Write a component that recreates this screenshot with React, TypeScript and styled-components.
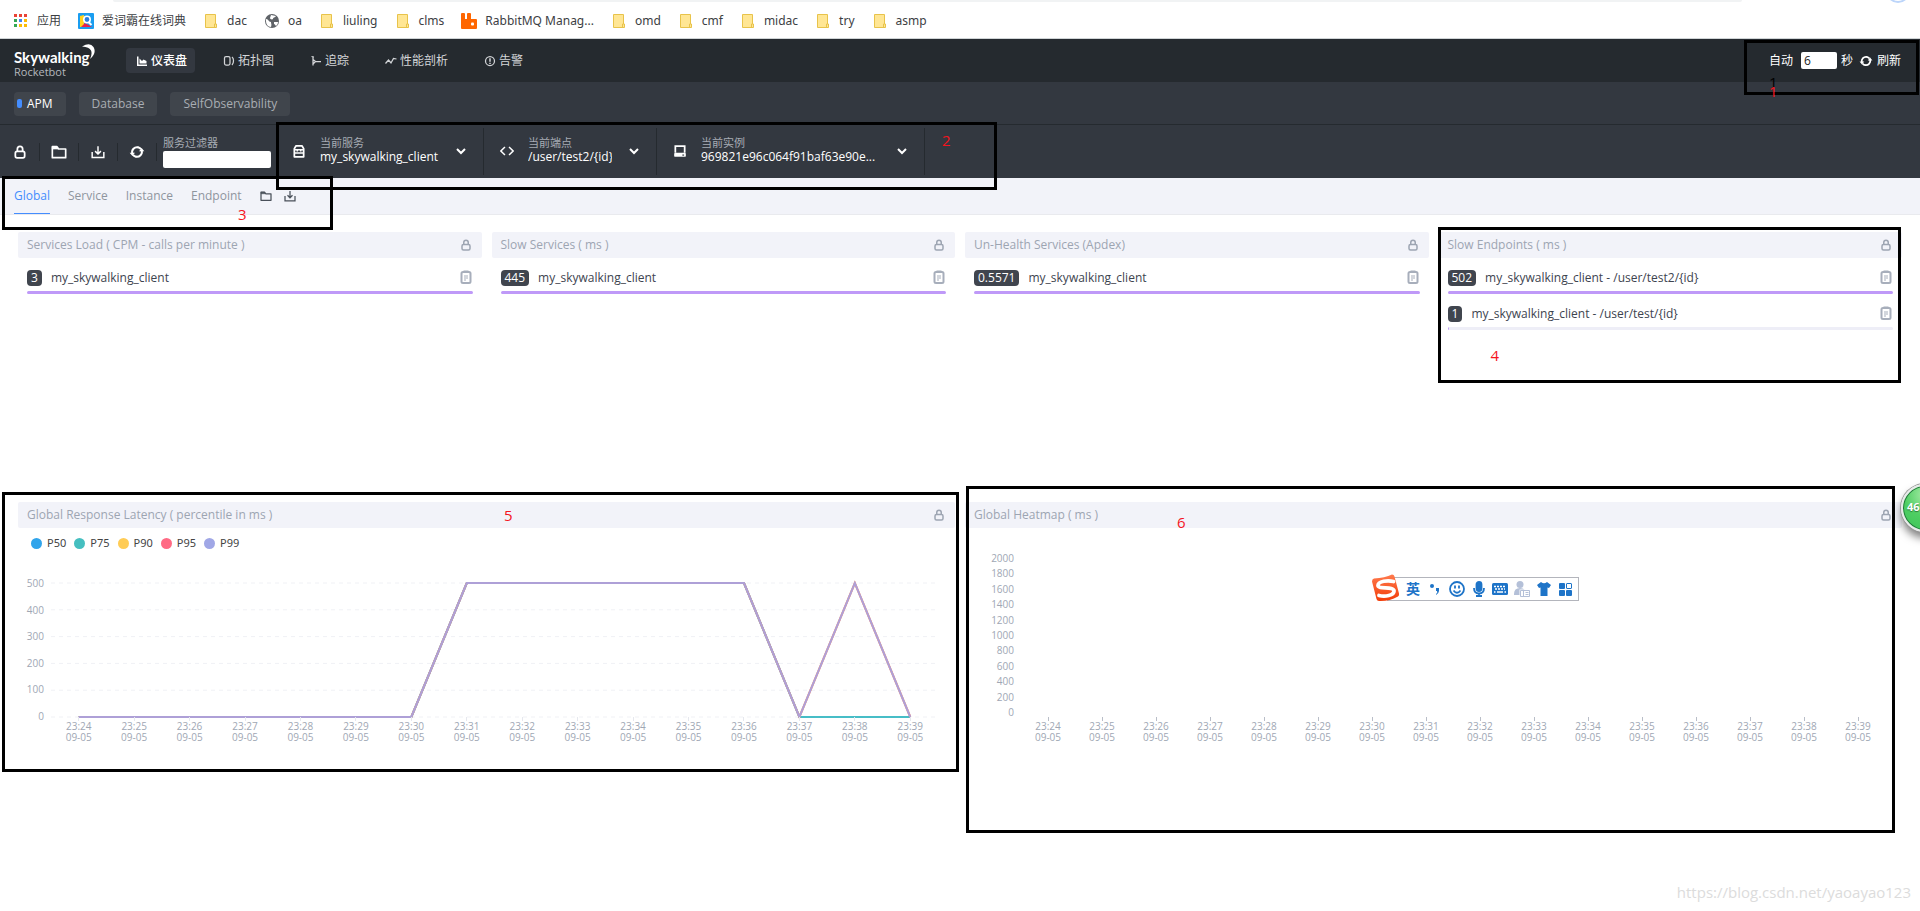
import React from 'react';
import styled, { createGlobalStyle, css } from 'styled-components';

const GlobalStyle = createGlobalStyle`
  *, *::before, *::after { box-sizing: border-box; }
  body {
    margin: 0;
    background: #fff;
    color: #3d444f;
    font-family: "Open Sans", "Noto Sans CJK SC", sans-serif;
    font-size: 12px;
    line-height: 16px;
  }
  button, input, select { font: inherit; color: inherit; }
  button { padding: 0; border: 0; background: none; cursor: pointer; }
  a { color: inherit; text-decoration: none; }
  svg { display: block; flex: none; }
  h2, ul { margin: 0; padding: 0; font-weight: 400; list-style: none; }
`;

/* ---------- shared ---------- */

const Page = styled.div`
  position: relative;
  min-height: 100vh;
  overflow: hidden;
`;

type MarkProps = {
  $top: number;
  $left?: number;
  $right?: number;
  $width?: number;
  $height: number;
};

const px = (v?: number) => (v === undefined ? 'auto' : `${v}px`);

const Mark = styled.div<MarkProps>`
  position: absolute;
  z-index: 5;
  top: ${(p) => px(p.$top)};
  left: ${(p) => px(p.$left)};
  right: ${(p) => px(p.$right)};
  width: ${(p) => px(p.$width)};
  height: ${(p) => px(p.$height)};
  border: 3px solid #000;
  pointer-events: none;
`;

const MarkNumber = styled.span<{ $top: number; $left: number; $dark?: boolean }>`
  position: absolute;
  top: ${(p) => p.$top}px;
  left: ${(p) => p.$left}px;
  color: ${(p) => (p.$dark ? '#000' : '#f5141e')};
  font-size: 15px;
  line-height: 14px;
`;

/* ---------- icons ---------- */

type IconProps = { size?: number };

const Icon = ({ size = 12, box = 24, children }: IconProps & { box?: number; children: React.ReactNode }) => (
  <svg width={size} height={size} viewBox={`0 0 ${box} ${box}`} fill="none" stroke="currentColor" strokeWidth="3" aria-hidden="true">
    {children}
  </svg>
);

const LockIcon = ({ size }: IconProps) => (
  <Icon size={size}>
    <rect x="4" y="11" width="16" height="11" rx="3" />
    <path d="M7.500 11V7a4.500 4.500 0 0 1 9 0v4" />
  </Icon>
);
const FolderIcon = ({ size }: IconProps) => (
  <Icon size={size}>
    <path d="M2 20.500V4h7l2.500 3.500H22v13z" strokeWidth="2.500" strokeLinejoin="round" />
    <path d="M2 4.500h7l2 3H2z" fill="currentColor" strokeWidth="1" />
  </Icon>
);
const DownloadIcon = ({ size }: IconProps) => (
  <Icon size={size}>
    <path d="M2 12v9.500h20V12" strokeWidth="2.500" />
    <path d="M12 2v13M7 10.500l5 5 5-5" strokeWidth="2.500" />
  </Icon>
);
const RefreshIcon = ({ size }: IconProps) => (
  <Icon size={size}>
    <path d="M5 14.500A7.500 7.500 0 0 1 14 5M19 9.500A7.500 7.500 0 0 1 10 19" />
    <path d="M1 13h8l-4 5zM15 11h8l-4-5z" fill="currentColor" stroke="none" />
    <path d="M13 4.800a7.500 7.500 0 0 1 5 3M11 19.200a7.500 7.500 0 0 1-5-3" />
  </Icon>
);
const ChartIcon = () => (
  <Icon>
    <path d="M3.500 3v17.500H22" />
    <path d="M7 17V7l5 5 3-3 6 3v5z" fill="currentColor" stroke="none" />
  </Icon>
);
const TopologyIcon = () => (
  <Icon>
    <rect x="3" y="3" width="11" height="17" rx="3" strokeWidth="2.500" />
    <path d="M18 4c4 3 4 12 0 16" strokeWidth="2.500" />
  </Icon>
);
const TraceIcon = () => (
  <Icon>
    <path d="M6 3v18M6 9l5 4h11M6 18l5-5M3 3l5 1" strokeWidth="2.500" />
  </Icon>
);
const ProfileIcon = () => (
  <Icon>
    <path d="M1 17l6-7 5 6 5-9 6 1" strokeWidth="2.500" />
  </Icon>
);
const AlarmIcon = () => (
  <Icon>
    <circle cx="12" cy="12" r="9" strokeWidth="2.500" />
    <path d="M12 6.500v7M12 15.500v2.500" />
  </Icon>
);
const ServiceIcon = () => (
  <Icon size={14}>
    <path d="M4 8l3-5h10l3 5v14H4z" strokeLinejoin="round" />
    <path d="M4 10h16M4 15.500h16M9 10v3M15 10v3" strokeWidth="2.500" />
  </Icon>
);
const CodeIcon = () => (
  <Icon size={14}>
    <path d="M8.500 5l-7 7 7 7M15.500 5l7 7-7 7" strokeWidth="2.500" />
  </Icon>
);
const InstanceIcon = () => (
  <Icon size={14}>
    <path d="M4 15V3.500h16V15" />
    <rect x="2" y="15" width="20" height="7" rx="2" fill="currentColor" stroke="none" />
    <path d="M16 19h3" stroke="#333840" strokeWidth="2" />
  </Icon>
);
const ChevronIcon = () => (
  <Icon size={10} box={10}>
    <path d="M1 3l4 4 4-4" strokeWidth="2" />
  </Icon>
);
const ClipboardIcon = () => (
  <svg width="12" height="14" viewBox="0 0 12 14" fill="none" stroke="currentColor" aria-hidden="true">
    <rect x="1.500" y="2" width="9" height="11" rx="1.500" strokeWidth="2" />
    <path d="M3.500 1.500h5" strokeWidth="2" />
    <path d="M4 6h4M4 8h4M4 10h2" strokeWidth="1" />
  </svg>
);

/* ---------- bookmarks bar ---------- */

const BookmarkBar = styled.nav`
  position: relative;
  display: flex;
  align-items: center;
  gap: 17px;
  height: 39px;
  padding: 3px 14px 0 13px;
  border-bottom: 1px solid #cfd4d6;
  color: #3c4043;
  font-family: "Noto Sans", "Noto Sans CJK SC", sans-serif;
  white-space: nowrap;
`;
const AddressEdge = styled.div`
  position: absolute;
  top: 0;
  left: 113px;
  right: 178px;
  height: 2px;
  border-radius: 0 0 8px 8px;
  background: #f1f3f4;
`;
const AvatarEdge = styled.div`
  position: absolute;
  top: -21px;
  right: 10px;
  width: 24px;
  height: 24px;
  border: 2px solid #bcd5fa;
  border-radius: 50%;
`;
const Bookmark = styled.a`
  display: flex;
  align-items: center;
  gap: 8px;
`;

const AppsGlyph = () => {
  const colours = ['#ea4335', '#ea4335', '#ea4335', '#34a853', '#4285f4', '#fbbc05', '#34a853', '#fbbc05', '#fbbc05'];
  return (
    <svg width="16" height="16" viewBox="0 0 16 16" aria-hidden="true">
      {colours.map((c, i) => (
        <rect key={i} x={1 + (i % 3) * 5} y={1 + Math.floor(i / 3) * 5} width="3" height="3" fill={c} />
      ))}
    </svg>
  );
};
const DictGlyph = () => (
  <svg width="16" height="16" viewBox="0 0 16 16" aria-hidden="true">
    <rect width="16" height="16" rx="1" fill="#1a9df0" />
    <path d="M2 14V3l4-1v12z" fill="#ffd21e" />
    <path d="M3 14l4-4 7 4z" fill="#e8204c" />
    <circle cx="9" cy="6.500" r="3.200" fill="#2a7fe0" stroke="#fff" strokeWidth="1.600" />
    <path d="M10.500 9l3 3" stroke="#fff" strokeWidth="2" />
  </svg>
);
const FolderGlyph = () => (
  <svg width="16" height="16" viewBox="0 0 16 16" aria-hidden="true">
    <path d="M2.500 1.500h10v9.500h1v3.500h-11z" fill="#ffe694" stroke="#e8c34a" />
    <path d="M11.500 14v-3h1" fill="none" stroke="#e8c34a" />
  </svg>
);
const GlobeGlyph = () => (
  <svg width="16" height="16" viewBox="0 0 16 16" aria-hidden="true">
    <circle cx="8" cy="8" r="7" fill="#5f6368" />
    <path d="M2 6c3 0 2 3 5 3 0 2 1 2 0 5-3 0-5-3-5-6zM7 2l5 1c-1 2-3 1-3 3-1 1-3 0-3-1zM10 9h4c0 2-1 3-2 4-1-1-1-2-2-2z" fill="#fff" />
  </svg>
);
const RabbitGlyph = () => (
  <svg width="16" height="16" viewBox="0 0 16 16" aria-hidden="true">
    <path d="M0 1a1 1 0 0 1 1-1h2a1 1 0 0 1 1 1v5h2V1a1 1 0 0 1 1-1h2a1 1 0 0 1 1 1v5h5a1 1 0 0 1 1 1v8a1 1 0 0 1-1 1H1a1 1 0 0 1-1-1z" fill="#f60" />
    <rect x="10" y="9.500" width="3" height="3" rx="1" fill="#fff" />
  </svg>
);

const bookmarks: [React.ComponentType, string][] = [
  [AppsGlyph, '应用'],
  [DictGlyph, '爱词霸在线词典'],
  [FolderGlyph, 'dac'],
  [GlobeGlyph, 'oa'],
  [FolderGlyph, 'liuling'],
  [FolderGlyph, 'clms'],
  [RabbitGlyph, 'RabbitMQ Manag...'],
  [FolderGlyph, 'omd'],
  [FolderGlyph, 'cmf'],
  [FolderGlyph, 'midac'],
  [FolderGlyph, 'try'],
  [FolderGlyph, 'asmp'],
];

/* ---------- header ---------- */

const Header = styled.header`
  position: relative;
  display: flex;
  align-items: center;
  height: 43px;
  padding: 0 19px 0 14px;
  background: #252a2f;
  color: #d3d5d8;
`;
const Brand = styled.a`
  position: relative;
  width: 112px;
  padding-top: 6px;
  color: #fff;
`;
const BrandName = styled.div`
  font-family: Lato, sans-serif;
  font-size: 15px;
  font-weight: 700;
  line-height: 16px;
`;
const BrandSub = styled.div`
  color: #b4b8bd;
  font-size: 11px;
  line-height: 14px;
`;
const Moon = styled.svg`
  position: absolute;
  top: 1px;
  left: 68px;
`;
const MainNav = styled.nav`
  display: flex;
  gap: 18px;
`;
const NavLink = styled.a<{ $active?: boolean }>`
  display: flex;
  align-items: center;
  gap: 3px;
  height: 25px;
  padding: 0 8px 0 10px;
  border-radius: 4px;
  ${(p) =>
    p.$active &&
    css`
      background: #333840;
      color: #fff;
      font-weight: 500;
    `}
`;
const AutoRefresh = styled.div`
  display: flex;
  align-items: center;
  margin-left: auto;
  color: #fff;
`;
const SecondsInput = styled.input`
  width: 36px;
  height: 17px;
  margin: 0 4px 0 8px;
  padding: 0 3px;
  border: 0;
  border-radius: 2px;
  background: #fff;
  color: #222;
`;
const RefreshButton = styled.button`
  display: flex;
  align-items: center;
  gap: 4px;
  margin-left: 6px;
`;

/* ---------- dashboards row ---------- */

const GroupRow = styled.div`
  display: flex;
  align-items: center;
  gap: 13px;
  height: 43px;
  padding: 1px 14px 0;
  border-bottom: 1px solid #252a2f;
  background: #333840;
`;
const GroupButton = styled.button<{ $active?: boolean }>`
  display: flex;
  align-items: center;
  gap: 5px;
  height: 24px;
  padding: 0 13px;
  border-radius: 4px;
  background: #40454c;
  color: #a9adb3;
  ${(p) =>
    p.$active &&
    css`
      padding: 0 13px 0 3px;
      color: #fff;
      &::before {
        content: '';
        width: 5px;
        height: 9px;
        border-radius: 2px;
        background: #448dfe;
      }
    `}
`;

/* ---------- toolbar ---------- */

const Toolbar = styled.div`
  display: flex;
  height: 53px;
  background: #333840;
  color: #fff;
`;
const ToolButton = styled.button`
  display: flex;
  align-items: center;
  justify-content: center;
  align-self: center;
  width: 39px;
  height: 18px;
  border-right: 1px solid #252a2f;
  &:first-child { width: 40px; }
`;
const Filter = styled.label`
  display: flex;
  flex-direction: column;
  justify-content: center;
  gap: 1px;
  padding: 0 5px 0 6px;
`;
const FieldLabel = styled.span`
  color: #a7acb4;
  font-size: 11px;
  line-height: 14px;
`;
const FilterInput = styled.input`
  width: 108px;
  height: 17px;
  padding: 0 4px;
  border: 0;
  border-radius: 2px;
  background: #fff;
  color: #222;
`;
const Selectors = styled.div`
  position: relative;
  display: flex;
  align-items: center;
`;
const Selector = styled.label`
  display: flex;
  align-items: center;
  height: 47px;
  padding: 0 17px 2px 16px;
  border-right: 1px solid #252a2f;
`;
const SelectorText = styled.span<{ $width: number }>`
  display: flex;
  flex-direction: column;
  width: ${(p) => p.$width}px;
  margin: 0 17px 0 14px;
`;
const Select = styled.select`
  width: 100%;
  height: 16px;
  margin: -1px 0 0;
  padding: 0;
  border: 0;
  appearance: none;
  background: #333840;
  color: #fff;
  line-height: 16px;
`;

const selectors = [
  { label: '当前服务', value: 'my_skywalking_client', width: 119, Glyph: ServiceIcon },
  { label: '当前端点', value: '/user/test2/{id}', width: 84, Glyph: CodeIcon },
  { label: '当前实例', value: '969821e96c064f91baf63e90e...', width: 179, Glyph: InstanceIcon },
];

/* ---------- tabs ---------- */

const TabBar = styled.nav`
  position: relative;
  display: flex;
  align-items: center;
  gap: 18px;
  height: 37px;
  padding: 0 14px;
  border-bottom: 1px solid #e9eaee;
  background: #f2f3f9;
  color: #8f959e;
`;
const Tab = styled.a<{ $active?: boolean }>`
  padding: 10px 0 9px;
  border-bottom: 1px solid ${(p) => (p.$active ? '#448dfe' : 'transparent')};
  color: ${(p) => (p.$active ? '#448dfe' : 'inherit')};
`;
const TabTools = styled.div`
  display: flex;
  gap: 12px;
  color: #4a505a;
`;

/* ---------- panels ---------- */

const Board = styled.main`
  display: grid;
  grid-template-columns: repeat(4, 1fr);
  grid-template-rows: 270px auto;
  padding: 17px 13px;
`;
const Panel = styled.section<{ $span?: number }>`
  grid-column: span ${(p) => p.$span ?? 1};
  min-width: 0;
  padding: 0 5px;
`;
const PanelInner = styled.div`
  position: relative;
`;
const PanelHead = styled.div`
  display: flex;
  align-items: center;
  justify-content: space-between;
  height: 26px;
  padding: 0 10px 0 9px;
  border-radius: 2px;
  background: #f2f3f9;
  color: #9da5b2;
`;
const PanelTitle = styled.h2`
  font-size: 12px;
  line-height: 16px;
`;
const List = styled.ul`
  padding: 11px 9px 0;
`;
const Item = styled.li`
  height: 36px;
  padding-top: 1px;
`;
const ItemRow = styled.div`
  display: flex;
  align-items: center;
  height: 16px;
`;
const Badge = styled.span`
  height: 16px;
  margin-right: 9px;
  padding: 0 4px;
  border-radius: 4px;
  background: #40454e;
  color: #fff;
`;
const CopyButton = styled.button`
  margin: -2px 1px 0 auto;
  color: #a7aebb;
`;
const Meter = styled.div`
  height: 3px;
  margin-top: 5px;
  border-radius: 2px;
  background: #eeeef7;
  overflow: hidden;
`;
const MeterFill = styled.div`
  height: 3px;
  min-width: 1px;
  background: #bf99f8;
`;

type Row = { value: string; name: string; share: number };

const Head = ({ title }: { title: string }) => (
  <PanelHead>
    <PanelTitle>{title}</PanelTitle>
    <button aria-label={`Lock ${title}`}>
      <LockIcon size={12} />
    </button>
  </PanelHead>
);

const ListPanel = ({ title, rows, children }: { title: string; rows: Row[]; children?: React.ReactNode }) => (
  <Panel>
    <PanelInner>
      <Head title={title} />
      <List>
        {rows.map((r) => (
          <Item key={r.name}>
            <ItemRow>
              <Badge>{r.value}</Badge>
              {r.name}
              <CopyButton aria-label={`Copy ${r.name}`}>
                <ClipboardIcon />
              </CopyButton>
            </ItemRow>
            <Meter>
              <MeterFill style={{ width: `${r.share}%` }} />
            </Meter>
          </Item>
        ))}
      </List>
      {children}
    </PanelInner>
  </Panel>
);

/* ---------- charts ---------- */

const Legend = styled.div`
  display: flex;
  align-items: flex-start;
  gap: 8px;
  height: 32px;
  padding: 7px 13px 0;
  color: #444;
  font-family: "Noto Sans", sans-serif;
  font-size: 11px;
`;
const LegendItem = styled.span<{ $colour: string }>`
  display: flex;
  align-items: center;
  gap: 5px;
  &::before {
    content: '';
    width: 11px;
    height: 11px;
    border-radius: 50%;
    background: ${(p) => p.$colour};
  }
`;
const ChartArea = styled.div<{ $left: number; $top: number }>`
  display: grid;
  grid-template-columns: ${(p) => p.$left}px 1fr;
  padding: ${(p) => p.$top}px 17px 0 0;
  color: #a0a7b4;
  font-size: 10px;
  line-height: 10px;
`;
const YAxis = styled.div<{ $height: number; $overhang?: number }>`
  display: flex;
  flex-direction: column;
  justify-content: space-between;
  height: ${(p) => p.$height}px;
  margin-bottom: -${(p) => p.$overhang ?? 0}px;
  padding-right: 7px;
  text-align: right;
`;
const Plot = styled.div`
  display: flex;
  align-items: flex-end;
  svg { width: 100%; height: 134px; overflow: visible; }
`;
const XAxis = styled.div`
  display: flex;
  grid-column: 2;
`;
const XLabel = styled.div<{ $tick: string }>`
  flex: 1;
  line-height: 11px;
  text-align: center;
  &::before {
    content: '';
    display: block;
    width: 1px;
    height: 4px;
    margin: 0 auto;
    background: ${(p) => p.$tick};
  }
`;

const times = Array.from({ length: 16 }, (_, i) => `23:${24 + i}`);

const TimeAxis = ({ tick }: { tick: string }) => (
  <XAxis>
    {times.map((t) => (
      <XLabel key={t} $tick={tick}>
        {t}
        <br />
        09-05
      </XLabel>
    ))}
  </XAxis>
);

const low = [0, 0, 0, 0, 0, 0, 0, 500, 500, 500, 500, 500, 500, 0, 0, 0];
const high = [0, 0, 0, 0, 0, 0, 0, 500, 500, 500, 500, 500, 500, 0, 500, 0];
const series = [
  { name: 'P50', colour: '#30a4eb', data: low },
  { name: 'P75', colour: '#45bfc0', data: low },
  { name: 'P90', colour: '#ffcc55', data: high },
  { name: 'P95', colour: '#ff6a84', data: high },
  { name: 'P99', colour: '#a0a7e6', data: high },
];

const LatencyChart = () => (
  <>
    <Legend>
      {series.map((s) => (
        <LegendItem key={s.name} $colour={s.colour}>
          {s.name}
        </LegendItem>
      ))}
    </Legend>
    <ChartArea $left={33} $top={18}>
      <YAxis $height={143} $overhang={4}>
        {[500, 400, 300, 200, 100, 0].map((v) => (
          <span key={v}>{v}</span>
        ))}
      </YAxis>
      <Plot>
        <svg viewBox="0 0 1600 500" preserveAspectRatio="none" role="img" aria-label="Global response latency">
          {[0, 100, 200, 300, 400, 500].map((y) => (
            <line key={y} x1="0" x2="1600" y1={y} y2={y} stroke="#f0f1f5" strokeDasharray="4 4" vectorEffect="non-scaling-stroke" />
          ))}
          {series.map((s) => (
            <polyline
              key={s.name}
              points={s.data.map((v, i) => `${i * 100 + 50},${500 - v}`).join(' ')}
              fill="none"
              stroke={s.colour}
              strokeOpacity="0.85"
              strokeWidth="2"
              vectorEffect="non-scaling-stroke"
            />
          ))}
        </svg>
      </Plot>
      <TimeAxis tick="#e6e8ee" />
    </ChartArea>
  </>
);

const HeatmapChart = () => (
  <ChartArea $left={56} $top={25}>
    <YAxis $height={164}>
      {Array.from({ length: 11 }, (_, i) => 2000 - i * 200).map((v) => (
        <span key={v}>{v}</span>
      ))}
    </YAxis>
    <Plot />
    <TimeAxis tick="#b9bec8" />
  </ChartArea>
);

/* ---------- floating widgets ---------- */

const ImeBar = styled.div`
  position: absolute;
  z-index: 6;
  top: 75px;
  right: 323px;
  display: flex;
  align-items: center;
  justify-content: space-between;
  width: 192px;
  height: 24px;
  padding: 0 4px 0 17px;
  border: 1px solid #b3b5bc;
  background: #fff;
  color: #1e74c8;
  button { display: flex; align-items: center; justify-content: center; width: 16px; }
`;
const ImeLogo = styled.svg`
  position: absolute;
  top: -5px;
  left: -17px;
`;
const ImeMode = styled.button`
  font-size: 14px;
  font-weight: 700;
`;

const Ime = () => (
  <ImeBar>
    <ImeLogo width="30" height="30" viewBox="0 0 30 30" aria-hidden="true">
      <defs>
        <linearGradient id="ime" x1="0" y1="0" x2="0" y2="1">
          <stop offset="0" stopColor="#ff7a4d" />
          <stop offset="1" stopColor="#f23d0a" />
        </linearGradient>
      </defs>
      <path d="M3 5.500Q14 5 21 1.500q2 0 2.500 2l4.500 17q.500 2-1 3Q18 28.500 8 28q-2 0-2.500-2L1 8.500Q1 6 3 5.500z" fill="url(#ime)" />
      <path d="M22.500 8.500C17 7 7 8 7 12.500c0 4 16 .500 16 5.500 0 4.500-9 6-15 4.500" fill="none" stroke="#fff" strokeWidth="3.800" strokeLinecap="round" />
    </ImeLogo>
    <ImeMode aria-label="英文输入">英</ImeMode>
    <button aria-label="标点">
      <svg width="10" height="12" viewBox="0 0 10 12" fill="currentColor"><circle cx="2" cy="3" r="2" /><path d="M6 5h3v3q0 2-3 4v-1q2-1 1-3H6z" /></svg>
    </button>
    <button aria-label="表情">
      <svg width="16" height="16" viewBox="0 0 16 16" fill="none" stroke="currentColor" strokeWidth="1.800"><circle cx="8" cy="8" r="7" /><path d="M6 4.500v3M10 4.500v3M4.500 9.500q3.500 4.500 7 0" /></svg>
    </button>
    <button aria-label="语音">
      <svg width="12" height="16" viewBox="0 0 12 16" fill="none" stroke="currentColor" strokeWidth="1.800"><rect x="3.500" y="1" width="5" height="9" rx="2.500" fill="currentColor" /><path d="M1 7q0 5.500 5 5.500T11 7M6 12v3M3 15h6" /></svg>
    </button>
    <button aria-label="键盘">
      <svg width="16" height="12" viewBox="0 0 16 12"><rect width="16" height="12" rx="1.500" fill="currentColor" /><path d="M2 3.500h12M3 6h10" stroke="#fff" strokeWidth="1.500" strokeDasharray="2 1" /><path d="M2 9h1.500M5 9h6M12.500 9H14" stroke="#fff" strokeWidth="1.500" /></svg>
    </button>
    <button aria-label="账户">
      <svg width="16" height="16" viewBox="0 0 16 16"><circle cx="6" cy="3.500" r="3.500" fill="#b4c0d8" /><path d="M0 13q0-6 6-6 3 0 4.500 1.500H5.500V14H0z" fill="#b4c0d8" /><path d="M6.500 9.500h9v6h-9zM9.500 9.500v6M11.500 11.500h3M11.500 13.500h3" fill="#fff" stroke="#b4c0d8" /></svg>
    </button>
    <button aria-label="皮肤">
      <svg width="14" height="14" viewBox="0 0 14 14" fill="currentColor"><path d="M4 0q3 2.500 6 0l4 3-2 3-1.500-.500V14h-7V5.500L2 6 0 3z" /></svg>
    </button>
    <button aria-label="工具箱">
      <svg width="13" height="13" viewBox="0 0 13 13" fill="currentColor"><rect width="6" height="6" rx="1" /><rect x="7.500" y=".5" width="5" height="5" rx=".5" fill="none" stroke="currentColor" /><rect y="7" width="6" height="6" rx="1" /><rect x="7" y="7" width="6" height="6" rx="1" /></svg>
    </button>
  </ImeBar>
);

const SpeedBall = styled.div`
  position: absolute;
  z-index: 7;
  top: 484px;
  right: -29px;
  width: 48px;
  height: 48px;
  padding: 13px 0 0 4px;
  border: 2px solid #e8eaea;
  border-radius: 50%;
  background: radial-gradient(circle at 50% 20%, #a5eba5, #4fce63 50%, #3cc457);
  box-shadow: 0 0 0 1px #999, inset 0 0 0 1px #23763b, 0 6px 9px rgba(0, 0, 0, 0.5);
  color: #fff;
  font-size: 11px;
  font-weight: 700;
  text-shadow: 0 1px 1px #2b7b39;
`;
const Watermark = styled.div`
  position: absolute;
  right: 9px;
  bottom: 9px;
  color: #dcdcdc;
  font-size: 15px;
  line-height: 20px;
`;

export default function App() {
  return (
    <Page>
      <GlobalStyle />
      <BookmarkBar aria-label="书签">
        <AddressEdge />
        <AvatarEdge />
        {bookmarks.map(([Glyph, text]) => (
          <Bookmark key={text} href="#">
            <Glyph />
            {text}
          </Bookmark>
        ))}
      </BookmarkBar>

      <Header>
        <Brand href="#">
          <BrandName>Skywalking</BrandName>
          <BrandSub>Rocketbot</BrandSub>
          <Moon width="14" height="16" viewBox="0 0 14 16" aria-hidden="true">
            <path d="M0 2.500Q8-2 11.500 3q3.500 6-3.500 12 2.500-5 1-8.500T0 2.500z" fill="#fff" />
          </Moon>
        </Brand>
        <MainNav>
          <NavLink href="#" $active><ChartIcon />仪表盘</NavLink>
          <NavLink href="#"><TopologyIcon />拓扑图</NavLink>
          <NavLink href="#"><TraceIcon />追踪</NavLink>
          <NavLink href="#"><ProfileIcon />性能剖析</NavLink>
          <NavLink href="#"><AlarmIcon />告警</NavLink>
        </MainNav>
        <AutoRefresh>
          <label htmlFor="seconds">自动</label>
          <SecondsInput id="seconds" defaultValue="6" />
          秒
          <RefreshButton><RefreshIcon size={14} />刷新</RefreshButton>
        </AutoRefresh>
        <Mark $top={1} $right={1} $width={175} $height={55}>
          <MarkNumber $top={32} $left={22} $dark>1</MarkNumber>
          <MarkNumber $top={41} $left={22}>1</MarkNumber>
        </Mark>
      </Header>

      <GroupRow>
        <GroupButton $active>APM</GroupButton>
        <GroupButton>Database</GroupButton>
        <GroupButton>SelfObservability</GroupButton>
      </GroupRow>

      <Toolbar>
        <ToolButton aria-label="锁定"><LockIcon size={14} /></ToolButton>
        <ToolButton aria-label="打开"><FolderIcon size={16} /></ToolButton>
        <ToolButton aria-label="下载"><DownloadIcon size={14} /></ToolButton>
        <ToolButton aria-label="刷新"><RefreshIcon size={16} /></ToolButton>
        <Filter>
          <FieldLabel>服务过滤器</FieldLabel>
          <FilterInput />
        </Filter>
        <Selectors>
          {selectors.map(({ label, value, width, Glyph }) => (
            <Selector key={label}>
              <Glyph />
              <SelectorText $width={width}>
                <FieldLabel>{label}</FieldLabel>
                <Select defaultValue={value}>
                  <option>{value}</option>
                </Select>
              </SelectorText>
              <ChevronIcon />
            </Selector>
          ))}
          <Mark $top={-3} $left={0} $width={721} $height={68}>
            <MarkNumber $top={8} $left={663}>2</MarkNumber>
          </Mark>
        </Selectors>
      </Toolbar>

      <TabBar>
        <Tab href="#" $active>Global</Tab>
        <Tab href="#">Service</Tab>
        <Tab href="#">Instance</Tab>
        <Tab href="#">Endpoint</Tab>
        <TabTools>
          <button aria-label="打开"><FolderIcon size={12} /></button>
          <button aria-label="下载"><DownloadIcon size={12} /></button>
        </TabTools>
        <Mark $top={-2} $left={2} $width={331} $height={54}>
          <MarkNumber $top={28} $left={233}>3</MarkNumber>
        </Mark>
      </TabBar>

      <Board>
        <ListPanel
          title="Services Load ( CPM - calls per minute )"
          rows={[{ value: '3', name: 'my_skywalking_client', share: 100 }]}
        />
        <ListPanel title="Slow Services ( ms )" rows={[{ value: '445', name: 'my_skywalking_client', share: 100 }]} />
        <ListPanel title="Un-Health Services (Apdex)" rows={[{ value: '0.5571', name: 'my_skywalking_client', share: 100 }]} />
        <ListPanel
          title="Slow Endpoints ( ms )"
          rows={[
            { value: '502', name: 'my_skywalking_client - /user/test2/{id}', share: 100 },
            { value: '1', name: 'my_skywalking_client - /user/test/{id}', share: 0.2 },
          ]}
        >
          <Mark $top={-5} $left={-1} $right={1} $height={156}>
            <MarkNumber $top={118} $left={50}>4</MarkNumber>
          </Mark>
        </ListPanel>

        <Panel $span={2}>
          <PanelInner>
            <Head title="Global Response Latency ( percentile in ms )" />
            <LatencyChart />
            <Mark $top={-10} $left={-16} $right={-4} $height={280}>
              <MarkNumber $top={13} $left={499}>5</MarkNumber>
            </Mark>
          </PanelInner>
        </Panel>
        <Panel $span={2}>
          <PanelInner>
            <Head title="Global Heatmap ( ms )" />
            <HeatmapChart />
            <Ime />
            <Mark $top={-16} $left={1} $right={7} $height={347}>
              <MarkNumber $top={26} $left={208}>6</MarkNumber>
            </Mark>
          </PanelInner>
        </Panel>
      </Board>

      <SpeedBall>46</SpeedBall>
      <Watermark>https://blog.csdn.net/yaoayao123</Watermark>
    </Page>
  );
}
